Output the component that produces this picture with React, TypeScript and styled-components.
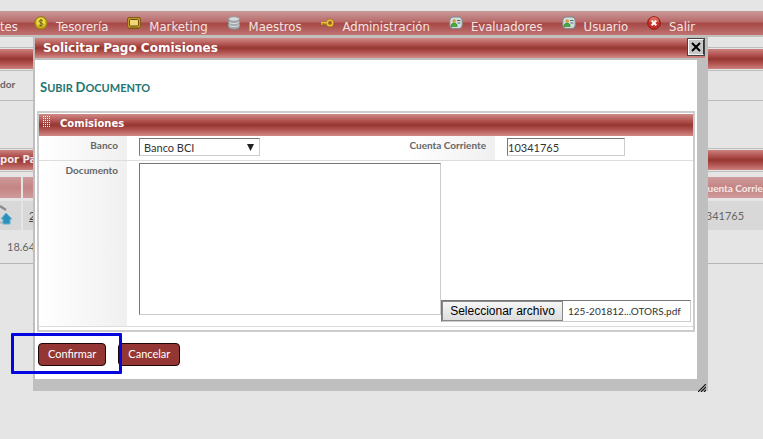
import React from "react";
import styled, { createGlobalStyle } from "styled-components";

const ui = `"Lato", "Open Sans", sans-serif`;
const tahoma = `"DejaVu Sans Condensed", "Noto Sans", sans-serif`;
const verdana = `"DejaVu Sans", sans-serif`;
const redBar = "linear-gradient(#d08a87, #b25552 30%, #963632 50%, #b25552 72%, #d08a87)";

const GlobalStyle = createGlobalStyle`
  *, *::before, *::after { box-sizing: border-box; }
  body { margin: 0; background: #e5e5e5; overflow: hidden; }
  button, input, select, textarea { font-family: inherit; margin: 0; }
`;

const Page = styled.div`
  position: relative;
  min-height: 100vh;
  padding-top: 11px;
  overflow: hidden;
  font: 11px/14px ${ui};
  color: #666;
`;

const Nav = styled.nav`
  display: flex;
  align-items: center;
  gap: 19px;
  height: 26px;
  overflow: hidden;
  border-bottom: 2px solid #c4bfbf;
  background: linear-gradient(#c99a99, #b86a69 46%, #a54745 50%, #c07472);
`;

const NavLink = styled.a<{ $edge?: boolean }>`
  display: flex;
  align-items: center;
  gap: 8px;
  flex: none;
  width: ${(p) => (p.$edge ? "15px" : "auto")};
  padding-top: 7px;
  font: 13px/18px ${tahoma};
  color: #f6e4e3;
  text-decoration: none;
  svg { margin-bottom: 8px; }
`;

const Strip = styled.div<{ $gap: number }>`
  height: 24px;
  margin-top: ${(p) => p.$gap}px;
  border: solid #bdbdbd;
  border-width: 1px 0;
  background: ${redBar};
  background-clip: content-box;
  padding: 1px 0;
  font: bold 10px/20px ${verdana};
  color: #f3e8e8;
`;

const FilterRow = styled.div`
  height: 30px;
  padding-top: 6px;
  border-bottom: 1px solid #bbb;
  font-weight: bold;
  font-size: 10px;
`;

const Results = styled.table`
  width: 100%;
  margin-top: 5px;
  table-layout: fixed;
  border-collapse: separate;
  border-spacing: 0;
  border-bottom: 1px solid #b5b5b5;
  th, td { padding: 0; white-space: nowrap; text-align: left; }
  th {
    height: 21px;
    background: linear-gradient(#cf9b9b, #c48483 50%, #cf9b9b);
    font-size: 10px;
    color: #f6e9e9;
  }
  tbody td { height: 29px; background: #d8d8d8; }
  tfoot td { height: 33px; padding-left: 7px; }
  th + th, tbody td + td { border-left: 2px solid #e5e5e5; }
  a { color: #444; padding-left: 6px; }
`;

const Spacer = styled.tr`
  && td { height: 3px; background: none; border: 0; }
`;

const AccountCol = styled.col`
  width: 76px;
`;
const ActionCol = styled.col`
  width: 21px;
`;
const AccountHead = styled.th`
  && { padding-left: 12px; }
`;
const AccountCell = styled.td`
  && { padding-left: 4px; }
`;

const Dialog = styled.section`
  position: absolute;
  top: 37px;
  left: 33px;
  right: 55px;
  border: solid #bfbfbf;
  border-width: 1px 3px 12px 2px;
  background: #bfbfbf;
`;

const TitleBar = styled.header`
  display: flex;
  justify-content: space-between;
  height: 20px;
  margin-bottom: 2px;
  background: ${redBar};
`;

const Title = styled.h1`
  margin: 0;
  padding-left: 8px;
  font: bold 12px/20px ${verdana};
  color: #fff;
`;

const CloseButton = styled.button`
  display: grid;
  place-items: center;
  width: 18px;
  height: 18px;
  padding: 0;
  border: 2px solid;
  border-color: #fff #333 #eee #fff;
  outline: 1px solid #444;
  outline-offset: -1px;
  background: #c8c8c8;
`;

const Content = styled.form`
  margin-right: 8px;
  padding: 18px 2px 13px;
  background: #fff;
`;

const Heading = styled.h2`
  height: 18px;
  margin: 0 0 15px;
  padding-left: 3px;
  font: bold 11px/18px ${ui};
  color: #1e7672;
`;

const Initial = styled.span`
  font-size: 13px;
`;

const Panel = styled.div`
  padding: 1px 0 3px;
  border: 2px solid #ccc;
`;

const PanelBar = styled.h3`
  display: flex;
  align-items: flex-start;
  gap: 9px;
  height: 22px;
  margin: 0;
  padding: 2px 0 0 4px;
  background: ${redBar};
  font: bold 10px/16px ${verdana};
  color: #fff;
`;

const Fields = styled.div`
  display: grid;
  grid-template-columns: 88px minmax(120px, 280fr) 88px minmax(120px, 198fr);
  border-bottom: 1px solid #ddd;
`;

const FieldLabel = styled.label`
  padding: 2px 9px 0 0;
  background: linear-gradient(90deg, #fff, #f0f0f0);
  font-weight: bold;
  font-size: 10px;
  text-align: right;
  white-space: nowrap;
`;

const Field = styled.div<{ $wide?: boolean }>`
  display: flex;
  align-items: ${(p) => (p.$wide ? "flex-end" : "flex-start")};
  padding: ${(p) => (p.$wide ? "2px 2px 4px 12px" : "2px 0 4px 12px")};
  grid-column: ${(p) => (p.$wide ? "span 3" : "auto")};
`;

const inset = `
  border: 1px solid;
  border-color: #777 #ccc #ccc #777;
  background: #fff;
  color: #333;
`;

const SelectWrap = styled.span`
  display: grid;
  align-items: center;
  width: 121px;
  svg { grid-area: 1 / 1; justify-self: end; margin-right: 6px; pointer-events: none; }
`;

const BankSelect = styled.select`
  ${inset}
  grid-area: 1 / 1;
  height: 18px;
  padding: 0 4px;
  appearance: none;
  font-size: 11px;
`;

const TextInput = styled.input`
  ${inset}
  width: 118px;
  height: 18px;
  padding: 0;
  font-size: 11px;
`;

const DocumentText = styled.textarea`
  ${inset}
  flex: 1;
  height: 152px;
  margin-bottom: 7px;
  resize: none;
`;

const FilePicker = styled.label`
  ${inset}
  position: relative;
  display: flex;
  align-items: center;
  flex: none;
  width: 250px;
  height: 22px;
  font-size: 10px;
  white-space: nowrap;
  input { position: absolute; inset: 0; width: 100%; opacity: 0; }
`;

const FileButton = styled.span`
  flex: none;
  width: 121px;
  margin-right: 5px;
  border: 1px solid #888;
  background: linear-gradient(#f6f6f6, #ddd);
  font: 12px/18px "Liberation Sans", sans-serif;
  color: #000;
  text-align: center;
`;

const Divider = styled.div`
  grid-column: 1 / -1;
  height: 1px;
  background: #ddd;
`;

const Actions = styled.div`
  display: flex;
  gap: 12px;
  padding: 11px 1px 0;
`;

const Marked = styled.div`
  position: relative;
  display: flex;
  &::after {
    content: "";
    position: absolute;
    inset: -10px -16px -8px -27px;
    z-index: 1;
    border: 3px solid #0505e0;
    border-radius: 1px;
    pointer-events: none;
  }
`;

const ActionButton = styled.button`
  height: 23px;
  padding: 0 9px 1px;
  border: 1px solid #1c0505;
  border-radius: 4px;
  background: #943634;
  color: #fff;
  font-size: 11px;
  line-height: 14px;
`;

const ResizeGrip = styled.svg`
  position: absolute;
  right: -1px;
  bottom: -13px;
`;

function CoinIcon() {
  return (
    <svg width="14" height="14" viewBox="0 0 14 14" aria-hidden="true">
      <circle cx="7" cy="7" r="6.3" fill="#c4a51b" stroke="#8b7412" />
      <circle cx="6.8" cy="6" r="4.6" fill="#ecd846" />
      <path d="M8.8 4.8C8 3.7 5.2 3.8 5.2 5.4S8.8 6.7 8.8 8.3 6 9.9 4.9 8.9M7 3v7.6" fill="none" stroke="#6b5810" />
    </svg>
  );
}
function ScreenIcon() {
  return (
    <svg width="14" height="14" viewBox="0 0 14 14" aria-hidden="true">
      <rect x=".5" y="1.5" width="13" height="10.5" rx="1.5" fill="#c29a2a" stroke="#805a10" />
      <rect x="2.5" y="3.5" width="9" height="6.5" rx="1" fill="#efd671" stroke="#6d4c0c" />
      <path d="M2 12.5h10" stroke="#795713" />
    </svg>
  );
}
function DatabaseIcon() {
  return (
    <svg width="14" height="14" viewBox="0 0 14 14" aria-hidden="true">
      <path d="M1.5 3v8c0 3 11 3 11 0V3z" fill="#a7aaae" stroke="#85898e" />
      <ellipse cx="7" cy="3" rx="5.5" ry="2.3" fill="#d8dadc" stroke="#969a9e" />
      <path d="M1.5 5.8c1 2.4 10 2.4 11 0M1.5 8.7c1 2.4 10 2.4 11 0" fill="none" stroke="#dddfe1" />
    </svg>
  );
}
function KeyIcon() {
  return (
    <svg width="14" height="14" viewBox="0 0 14 14" aria-hidden="true">
      <path d="M7 7H1M2 7v2.5M5 7v2" fill="none" stroke="#7d570b" strokeWidth="2.2" />
      <circle cx="10" cy="7" r="2.7" fill="none" stroke="#86610c" strokeWidth="3" />
      <path d="M7 6.6H1M2 7v2M5 7v1.6" fill="none" stroke="#e8c034" strokeWidth="1.3" />
      <circle cx="10" cy="6.9" r="2.7" fill="none" stroke="#e8c034" strokeWidth="1.8" />
    </svg>
  );
}
function UserCardIcon() {
  return (
    <svg width="14" height="14" viewBox="0 0 14 14" aria-hidden="true">
      <rect x=".8" y="1" width="12.4" height="11.5" rx="3.5" fill="#d3dcdc" stroke="#7d8a8b" />
      <circle cx="5.2" cy="5" r="1.8" fill="#d2a23a" />
      <path d="M2 10.4c0-4.4 6.2-4.4 6.2 0z" fill="#45ae3a" stroke="#27772b" strokeWidth=".6" />
      <path d="M8 4.5h3.5M8.5 7h2.8" stroke="#526b70" />
    </svg>
  );
}
function ExitIcon() {
  return (
    <svg width="14" height="14" viewBox="0 0 14 14" aria-hidden="true">
      <circle cx="7" cy="7" r="6.3" fill="#c62f26" stroke="#8b1715" />
      <path d="M2 6a5 5 0 0 1 10 0c-3-1-7-1-10 0" fill="#dc6b5c" />
      <path d="m4.7 4.7 4.6 4.6m0-4.6L4.7 9.3" stroke="#fff" strokeWidth="2" />
    </svg>
  );
}
function UploadIcon() {
  return (
    <svg width="13" height="21" viewBox="0 0 13 21" aria-hidden="true">
      <path d="M0 2 6 6" stroke="#8c8c8c" strokeWidth="2.4" />
      <path d="M0 18.5h3" stroke="#b5b5b5" strokeWidth="2" />
      <path d="M6 9 1 15h2v5h7v-5h2z" fill="#2b91bd" stroke="#60b2d0" />
    </svg>
  );
}

const grip = [0, 2, 4, 6];
const menu = [
  { label: "Tesorería", Icon: CoinIcon },
  { label: "Marketing", Icon: ScreenIcon },
  { label: "Maestros", Icon: DatabaseIcon },
  { label: "Administración", Icon: KeyIcon },
  { label: "Evaluadores", Icon: UserCardIcon },
  { label: "Usuario", Icon: UserCardIcon },
  { label: "Salir", Icon: ExitIcon },
];

export default function App() {
  return (
    <>
      <GlobalStyle />
      <Page>
        <Nav>
          <NavLink href="#" $edge>tes</NavLink>
          {menu.map(({ label, Icon }) => (
            <NavLink href="#" key={label}>
              <Icon />
              {label}
            </NavLink>
          ))}
        </Nav>
        <Strip $gap={10} />
        <FilterRow>dor</FilterRow>
        <Strip $gap={47}>por Pa</Strip>
        <Results>
          <colgroup>
            <ActionCol />
            <col />
            <AccountCol />
          </colgroup>
          <thead>
            <tr>
              <th />
              <th />
              <AccountHead>Cuenta Corriente</AccountHead>
            </tr>
          </thead>
          <tbody>
            <Spacer>
              <td colSpan={3} />
            </Spacer>
            <tr>
              <td>
                <UploadIcon />
              </td>
              <td>
                <a href="#">2</a>
              </td>
              <AccountCell>10341765</AccountCell>
            </tr>
          </tbody>
          <tfoot>
            <tr>
              <td colSpan={3}>18.64</td>
            </tr>
          </tfoot>
        </Results>

        <Dialog role="dialog" aria-labelledby="dialog-title">
          <TitleBar>
            <Title id="dialog-title">Solicitar Pago Comisiones</Title>
            <CloseButton type="button" aria-label="Cerrar">
              <svg width="10" height="10" viewBox="0 0 10 10" aria-hidden="true">
                <path d="m1 1 8 8m0-8L1 9" stroke="#000" strokeWidth="2" />
              </svg>
            </CloseButton>
          </TitleBar>
          <Content onSubmit={(e: React.FormEvent) => e.preventDefault()}>
            <Heading>
              <Initial>S</Initial>UBIR <Initial>D</Initial>OCUMENTO
            </Heading>
            <Panel>
              <PanelBar>
                <svg width="8" height="12" viewBox="0 0 8 12" aria-hidden="true">
                  {[0, 2, 4, 6, 8, 10].map((y) =>
                    grip.map((x) => <rect key={`${x}-${y}`} x={x} y={y} width="1" height="1" fill="#fff" />)
                  )}
                </svg>
                Comisiones
              </PanelBar>
              <Fields>
                <FieldLabel htmlFor="banco">Banco</FieldLabel>
                <Field>
                  <SelectWrap>
                    <BankSelect id="banco">
                      <option>Banco BCI</option>
                    </BankSelect>
                    <svg width="7" height="7" viewBox="0 0 7 7" aria-hidden="true">
                      <path d="M0 0h7L3.5 7z" fill="#222" />
                    </svg>
                  </SelectWrap>
                </Field>
                <FieldLabel htmlFor="cuenta">Cuenta Corriente</FieldLabel>
                <Field>
                  <TextInput id="cuenta" defaultValue="10341765" />
                </Field>
                <Divider />
                <FieldLabel htmlFor="documento">Documento</FieldLabel>
                <Field $wide>
                  <DocumentText id="documento" />
                  <FilePicker>
                    <FileButton>Seleccionar archivo</FileButton>
                    125-201812...OTORS.pdf
                    <input type="file" aria-label="Seleccionar archivo" />
                  </FilePicker>
                </Field>
              </Fields>
            </Panel>
            <Actions>
              <Marked>
                <ActionButton type="submit">Confirmar</ActionButton>
              </Marked>
              <ActionButton type="button">Cancelar</ActionButton>
            </Actions>
          </Content>
          <ResizeGrip width="8" height="8" viewBox="0 0 8 8" aria-hidden="true">
            <path d="M0 8 8 0M3 8l5-5M6 8l2-2" stroke="#111" strokeWidth="1.2" />
          </ResizeGrip>
        </Dialog>
      </Page>
    </>
  );
}
